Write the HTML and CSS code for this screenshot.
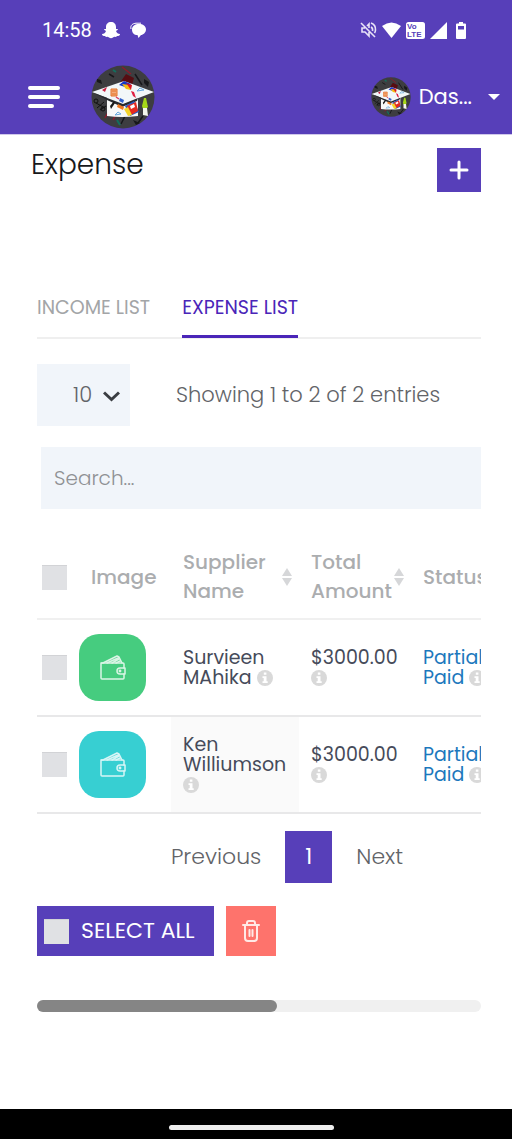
FILE: index.html
```html
<!DOCTYPE html>
<html lang="en">
<head>
<meta charset="utf-8">
<meta name="viewport" content="width=device-width, initial-scale=1">
<title>Expense</title>
<link rel="stylesheet" href="styles.css">
</head>
<body>
<svg class="defs" aria-hidden="true">
  <symbol id="cap" viewBox="0 0 64 64">
    <circle cx="32" cy="32" r="31.5" fill="#3d3d40"/>
    <path d="M35 9l8 4-3 10-12-4z" fill="#560d12"/>
    <path d="M31 2l9 7M14 53l5-9M22 55l5-10" stroke="#8c1a2b" stroke-width="1.5"/>
    <path d="M44 9l7 11M9 45l6-4M34 51l-4 8M52 51l-5 7M18 9l5 3" stroke="#17171a" stroke-width="1.5"/>
    <path d="M22 5l3 2M26 55l3 5" stroke="#12705e" stroke-width="2"/>
    <path d="M6 14l4 1 1 4-5-2zM53 14l5 3-1 5-4-4zM42 55l7 3-4 2z" fill="#17171a"/>
    <path d="M5 38l9 5M6 43l7-6" stroke="#111" fill="none"/>
    <circle cx="5" cy="36" r="2" fill="none" stroke="#111"/><circle cx="12" cy="44" r="2" fill="none" stroke="#111"/>
    <path d="M16 31h31v20q-16 2-31 0z" fill="#f7f8f8"/>
    <path d="M1 27l32-11 30 11-31 12z" fill="#f2f7f9"/>
    <path d="M3 28l29 11 15-6-1 3-15 6-15-7z" fill="#27292e"/>
    <path d="M28 20l5-4 7 3-3 4z" fill="#1436c8"/><path d="M31 19l7 1 2 5-5-1z" fill="#f5bd12"/><path d="M35 18l6 2-1 5z" fill="#dc1822"/>
    <path d="M11 25l5-3-2 5z" fill="#c81e40"/>
    <path d="M20 24h6v7h-6zM21 26h4M21 29h4" fill="#f3ad7c" stroke="#e57025"/>
    <path d="M40 26l3 1 2 6-3-2z" fill="#df2145"/><path d="M46 26l3-3 4 2zM24 50l3-3 3 2z" fill="none" stroke="#68a8dc"/>
    <path d="M29 33l4 2-1 3-4-2z" fill="#3160ca"/><path d="M25 32l3 2" stroke="#d84162" stroke-width="1.5"/>
    <path d="M19 41l4-5 1 2-4 6z" fill="#171717"/><path d="M27 39l6 3-1 3-6-3z" fill="#ee7922"/>
    <path d="M34 41l9-5 5 11-9 4z" fill="#245bc3"/><path d="M36 41l9-4 2 9-7 4z" fill="#e52a20"/><path d="M33 44l4-2 4 8-4 1z" fill="#f4d42a"/><path d="M39 41l4-2 1 3-4 2z" fill="#fff"/>
    <path d="M53 33l2 0 2 9-2 2h-3l-1-3z" fill="#a5d719"/><path d="M52 43h4l1 8-5-1z" fill="#f4f6ed"/>
  </symbol>
  <symbol id="wallet" viewBox="0 0 28 26">
    <g fill="none" stroke="currentColor" stroke-width="1.5" stroke-linejoin="round" stroke-linecap="round">
      <path d="M25 13V9q0-1-1-1H3q-1 0-1 1v14q0 1 1 1h21q1 0 1-1v-4"/>
      <path d="M26 13h-5a3 3 0 0 0 0 6h5z"/><circle cx="21" cy="16" r=".7"/>
      <path d="M4 8L18 1l2 1 3 6M8 8l11-5M13 8l7-4M17 8l4-2M4 8H2"/>
    </g>
  </symbol>
  <symbol id="info" viewBox="0 0 16 16">
    <circle cx="8" cy="8" r="8" fill="#d9d9d9"/>
    <path d="M6.800 2.500h2.600v2.300H6.800zM5.500 6.200h4v5h1.200v1.800H5.500v-1.800h1.200V8H5.500z" fill="#fff"/>
  </symbol>
  <symbol id="sort" viewBox="0 0 10 18">
    <path d="M5 0l5 8H0zM5 18l5-8H0z" fill="#d6d7d9"/>
  </symbol>
</svg>

<header class="top">
  <div class="status">
    <span class="clock">14:58</span>
    <svg width="18" height="18" viewBox="0 0 18 18" fill="#fff"><path d="M9 1c3 0 5 2 5 5v2l2 0q0 1-2 2 1 3 4 3 0 2-3 2l-1 1q-2-.5-3 .5-2 1.500-4 0-1-1-3-.5l-1-1q-3 0-3-2 3 0 4-3-2-1-2-2l2 0V6c0-3 2-5 5-5z"/></svg>
    <svg class="chat" width="17" height="17" viewBox="0 0 17 17"><path d="M1 7C0 3 3 1.500 6 1.200l5 0" fill="none" stroke="#fff" stroke-width="1"/><path d="M9 2c4 0 7 2 7 5.500 0 3-3 5.500-5 5.500L8.500 16l-1-3C4 13 2 11 2 7.500S5 2 9 2z" fill="#fff"/></svg>
    <span class="system">
      <svg width="17" height="18" viewBox="0 0 17 18" fill="none" stroke="#e8e2f7" stroke-width="1.600"><path d="M1 2l14 14M7 5l2-2v4M9 11v4l-4-4H2V7h3M11 6q2 1 1.500 4M11 2q5 2 4.500 7-.2 2-1 3"/></svg>
      <svg width="19" height="16" viewBox="0 0 19 16"><path d="M0 4Q9.500-3 19 4L9.500 16z" fill="#fff"/></svg>
      <svg class="lte" width="19" height="17" viewBox="0 0 19 17"><rect width="19" height="17" rx="2.500" fill="#fff"/><text x="1" y="7">Vo</text><text x="1" y="15">LTE</text></svg>
      <svg width="17" height="17" viewBox="0 0 17 17"><path d="M17 0v17H0z" fill="#fff"/></svg>
      <svg class="battery" width="10" height="17" viewBox="0 0 10 17"><path d="M3 0h4v1.500h2q1 0 1 1V16q0 1-1 1H1q-1 0-1-1V2.500q0-1 1-1h2z" fill="#fff"/><path d="M2 4h6v3.500H2z" fill="#573fb9"/></svg>
    </span>
  </div>
  <div class="bar">
    <button class="menu" aria-label="Menu"><svg width="32" height="24" viewBox="0 0 32 24" stroke="#fff" stroke-width="4" stroke-linecap="round"><path d="M2 3h28M2 12h28M2 21h22"/></svg></button>
    <a class="logo" href="#" aria-label="Home"><svg width="64" height="64"><use href="#cap"/></svg></a>
    <button class="account"><svg width="40" height="40"><use href="#cap"/></svg><span>Das...</span><svg class="caret" width="12" height="6" viewBox="0 0 12 6"><path d="M0 0h12L6 6z" fill="#fff"/></svg></button>
  </div>
</header>

<main>
  <div class="heading">
    <h1>Expense</h1>
    <button class="add" aria-label="Add expense"><svg width="20" height="20" viewBox="0 0 20 20" stroke="#fff" stroke-width="3" stroke-linecap="round"><path d="M10 2v16M2 10h16"/></svg></button>
  </div>

  <section class="panel">
    <nav class="tabs">
      <a href="#income">INCOME LIST</a>
      <a href="#expense" class="active" aria-current="page">EXPENSE LIST</a>
    </nav>
    <div class="controls">
      <span class="length">
        <select aria-label="Entries per page"><option>10</option><option>25</option></select>
        <svg class="chevron" width="17" height="11" viewBox="0 0 17 11"><path d="M1 1.500l7.500 7 7.500-7" fill="none" stroke="#3a3d42" stroke-width="3"/></svg>
      </span>
      <span>Showing 1 to 2 of 2 entries</span>
    </div>
    <input class="search" type="search" aria-label="Search" placeholder="Search...">

    <div class="scroller">
      <table>
        <colgroup><col class="c-check"><col class="c-image"><col class="c-name"><col class="c-total"><col class="c-status"></colgroup>
        <thead>
          <tr>
            <th><input type="checkbox" aria-label="Select all rows"></th>
            <th class="image">Image</th>
            <th><span class="sortable">Supplier Name<svg width="10" height="18"><use href="#sort"/></svg></span></th>
            <th><span class="sortable">Total Amount<svg width="10" height="18"><use href="#sort"/></svg></span></th>
            <th>Status</th>
          </tr>
        </thead>
        <tbody>
          <tr>
            <td><input type="checkbox" aria-label="Select Survieen MAhika"></td>
            <td class="pic"><span class="tile green"><svg width="28" height="26"><use href="#wallet"/></svg></span></td>
            <td>Survieen MAhika <svg class="info"><use href="#info"/></svg></td>
            <td>$3000.00 <svg class="info"><use href="#info"/></svg></td>
            <td class="paid">Partially<br>Paid <svg class="info"><use href="#info"/></svg></td>
          </tr>
          <tr>
            <td><input type="checkbox" aria-label="Select Ken Williumson"></td>
            <td class="pic"><span class="tile teal"><svg width="28" height="26"><use href="#wallet"/></svg></span></td>
            <td class="hovered">Ken Williumson <svg class="info"><use href="#info"/></svg></td>
            <td>$3000.00 <svg class="info"><use href="#info"/></svg></td>
            <td class="paid">Partially<br>Paid <svg class="info"><use href="#info"/></svg></td>
          </tr>
        </tbody>
      </table>
    </div>

    <nav class="pages" aria-label="Pagination">
      <a href="#prev">Previous</a><a href="#1" class="current">1</a><a href="#next">Next</a>
    </nav>
    <div class="actions">
      <label class="all"><input type="checkbox">SELECT ALL</label>
      <button class="delete" aria-label="Delete"><svg width="18" height="22" viewBox="0 0 18 22" fill="none" stroke="#ffe9e6" stroke-width="2" stroke-linecap="round" stroke-linejoin="round"><path d="M1 5h16M5 5V3q0-2 2-2h4q2 0 2 2v2M3 5v13q0 3 3 3h6q3 0 3-3V5M7.500 10v6M10.500 10v6"/></svg></button>
    </div>
    <div class="track"><div class="thumb"></div></div>
  </section>
</main>
<footer><span></span></footer>
</body>
</html>
```
FILE: styles.css
```css
* { box-sizing: border-box; }
body {
  margin: 0;
  min-height: 100vh;
  display: flex;
  flex-direction: column;
  background: #fff;
  color: #626468;
  font: 300 21px/24px Poppins, Inter, sans-serif;
}
svg { display: block; flex: none; }
.defs { position: absolute; width: 0; height: 0; }
button, input, select { font: inherit; color: inherit; border: 0; border-radius: 0; margin: 0; padding: 0; }
button { background: none; display: flex; align-items: center; justify-content: center; }
a { color: inherit; text-decoration: none; }

.top { background: #573fb9; color: #fff; border-bottom: 1px solid #cfc8ea; }
.status { display: flex; align-items: center; height: 60px; padding: 0 46px 0 42px; }
.clock { font: 400 20px/24px Roboto, sans-serif; margin-right: 10px; }
.chat { margin-left: 10px; }
.system { margin-left: auto; display: flex; align-items: center; gap: 5px; }
.battery { margin-left: 4px; }
.lte text { font: 700 8px "Liberation Sans", sans-serif; fill: #573fb9; }
.bar { display: flex; align-items: center; height: 74px; padding: 0 12px 0 28px; }
.logo { margin-left: 31px; }
.account { margin-left: auto; font-weight: 400; gap: 8px; }
.caret { margin-left: 8px; }

main { flex: 1; padding: 13px 31px 20px; }
.heading { display: flex; justify-content: space-between; align-items: flex-start; height: 44px; }
h1 { margin: 0; color: #17181b; font-size: 28px; font-weight: 300; line-height: 34px; }
.add { width: 44px; height: 44px; background: #573fb9; }

.panel { margin: 95px 0 0 6px; }
.tabs { display: flex; gap: 32px; border-bottom: 2px solid #efefef; color: #a3a5a7; font-size: 19px; font-weight: 400; }
.tabs a { padding: 9px 0 15px; margin-bottom: -1px; border-bottom: 3px solid transparent; }
.tabs .active { color: #4a25b8; border-color: #4a25b8; }
.controls { display: flex; align-items: center; gap: 46px; margin-top: 25px; }
.length { position: relative; width: 93px; }
.length select { display: block; width: 100%; height: 62px; padding-left: 36px; appearance: none; background: #f1f5fa; }
.chevron { position: absolute; right: 10px; top: 27px; pointer-events: none; }
.search { display: block; width: calc(100% - 4px); height: 62px; margin: 21px 0 0 4px; padding: 0 13px; background: #f1f5fa; font-size: 20px; appearance: none; }
.search::placeholder { color: #8f9194; opacity: 1; }

.scroller { margin-top: 27px; overflow-x: auto; scrollbar-width: none; }
table { width: 822px; table-layout: fixed; border-collapse: collapse; }
.c-check { width: 38px; }
.c-image { width: 96px; }
.c-name { width: 128px; }
.c-total { width: 112px; }
th, td { text-align: left; padding: 0 0 0 12px; border-bottom: 2px solid #e8e8e9; }
th { height: 83px; color: #abadaf; font-size: 20px; font-weight: 500; line-height: 29px; border-bottom-color: #f0f0f0; }
td { height: 97px; color: #464b5a; font-size: 19px; font-weight: 400; line-height: 20px; }
th:first-child, td:first-child { padding-left: 5px; }
th.image { padding-left: 16px; }
td.pic { padding-left: 4px; }
td.paid { color: #1c78bd; }
td.hovered { background: #fafafa; }
.sortable { display: flex; align-items: center; justify-content: space-between; padding-right: 7px; }
.info { display: inline-block; width: 16px; height: 16px; vertical-align: -2px; }
input[type="checkbox"] { appearance: none; display: block; width: 25px; height: 25px; background: #e0e1e4; border-top: 1px solid #d2d3d6; }
.tile { display: flex; align-items: center; justify-content: center; width: 67px; height: 67px; border-radius: 20px; color: #fff; }
.tile svg { opacity: .8; }
.green { background: #46cc7f; }
.teal { background: #37cfd2; }

.pages { display: flex; justify-content: center; align-items: center; gap: 24px; margin-top: 17px; padding-left: 56px; font-size: 22px; }
.pages .current { width: 47px; line-height: 52px; text-align: center; font-weight: 400; color: #fff; background: #573fb9; }
.actions { display: flex; gap: 12px; margin-top: 23px; }
.all { display: flex; align-items: center; gap: 12px; height: 50px; padding: 0 19px 0 7px; color: #fff; background: #573fb9; font-size: 22px; font-weight: 400; }
.delete { width: 50px; height: 50px; background: #fe736c; }
.track { height: 12px; margin-top: 44px; border-radius: 6px; background: #f0f0f0; }
.thumb { width: 54%; height: 12px; border-radius: 6px; background: #858585; }
footer { height: 30px; background: #000; display: flex; align-items: center; justify-content: center; }
footer span { width: 165px; height: 5px; margin: 6px 10px 0 0; border-radius: 3px; background: #eee; }
```
